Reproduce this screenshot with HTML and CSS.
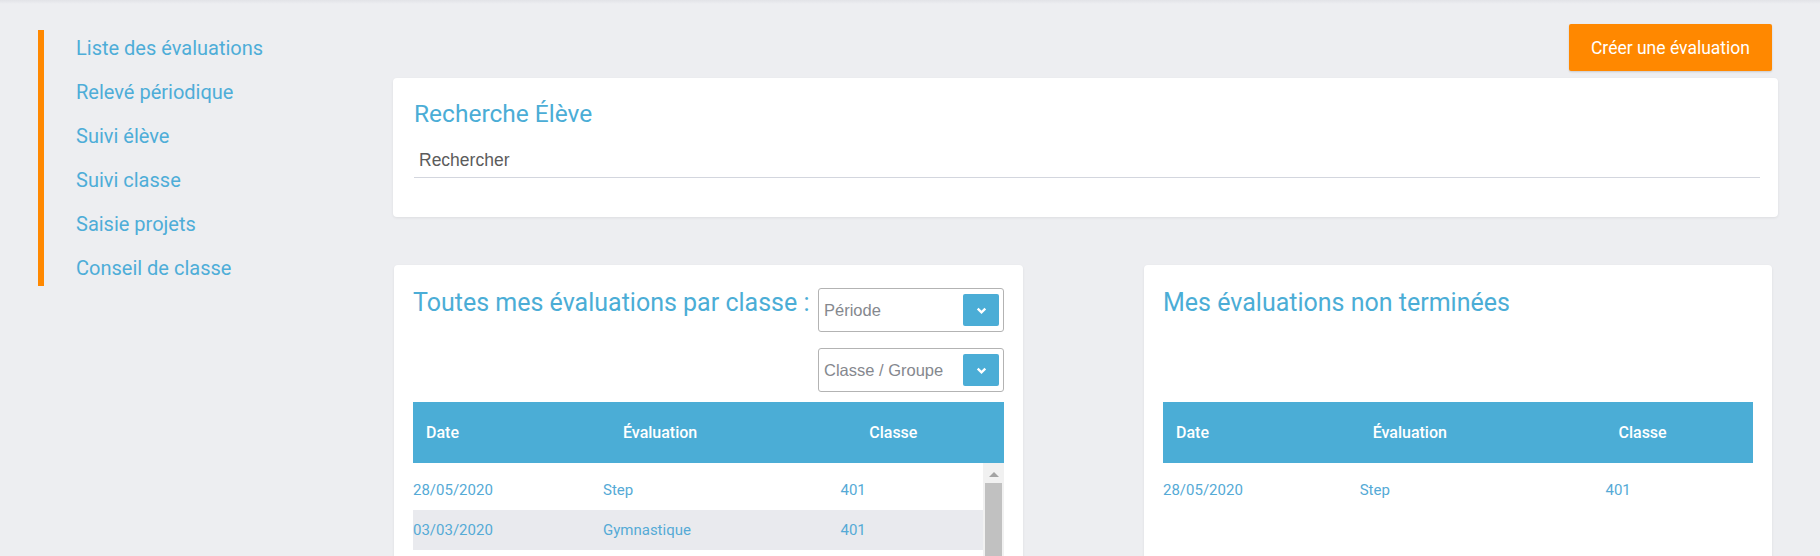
FILE: index.html
```html
<!DOCTYPE html>
<html lang="fr">
  <head>
    <meta charset="utf-8">
    <title>Évaluations</title>
    <link rel="stylesheet" href="styles.css">
  </head>
  <body>
    <div class="app">
      <aside class="sidebar">
        <nav class="side-nav">
          <a href="#">Liste des évaluations</a>
          <a href="#">Relevé périodique</a>
          <a href="#">Suivi élève</a>
          <a href="#">Suivi classe</a>
          <a href="#">Saisie projets</a>
          <a href="#">Conseil de classe</a>
        </nav>
      </aside>

      <main class="main">
        <div class="actions">
          <button class="btn-orange">Créer une évaluation</button>
        </div>

        <section class="card card-search">
          <h2>Recherche Élève</h2>
          <input class="search-input" type="text" placeholder="Rechercher">
        </section>

        <div class="cols">
          <!-- toutes les evaluations -->
          <section class="card card-half">
            <div class="card-head">
              <h2>Toutes mes évaluations par classe :</h2>
              <div class="filters">
                <div class="select">
                  <span>Période</span>
                  <span class="select-btn">
                    <svg width="11" height="8" viewBox="0 0 11 8"><path d="M1.7 1.6 L5.5 5.4 L9.3 1.6" fill="none" stroke="#fff" stroke-width="2.3"/></svg>
                  </span>
                </div>
                <div class="select">
                  <span>Classe / Groupe</span>
                  <span class="select-btn">
                    <svg width="11" height="8" viewBox="0 0 11 8"><path d="M1.7 1.6 L5.5 5.4 L9.3 1.6" fill="none" stroke="#fff" stroke-width="2.3"/></svg>
                  </span>
                </div>
              </div>
            </div>
            <div class="table">
              <div class="table-header">
                <div>Date</div>
                <div>Évaluation</div>
                <div>Classe</div>
              </div>
              <div class="table-body">
                <div class="rows">
                  <div class="row"><div>28/05/2020</div><div>Step</div><div>401</div></div>
                  <div class="row"><div>03/03/2020</div><div>Gymnastique</div><div>401</div></div>
                </div>
                <div class="scrollbar">
                  <span class="scroll-up"></span>
                  <span class="scroll-thumb"></span>
                </div>
              </div>
            </div>
          </section>

          <!-- non terminees -->
          <section class="card card-half">
            <div class="card-head">
              <h2>Mes évaluations non terminées</h2>
            </div>
            <div class="table">
              <div class="table-header">
                <div>Date</div>
                <div>Évaluation</div>
                <div>Classe</div>
              </div>
              <div class="table-body">
                <div class="rows">
                  <div class="row"><div>28/05/2020</div><div>Step</div><div>401</div></div>
                </div>
              </div>
            </div>
          </section>
        </div>
      </main>
    </div>
  </body>
</html>
```

FILE: styles.css
```css
html, body{
  margin: 0;
  height: 100%;
}

body{
  overflow: hidden;
  background: linear-gradient(#e2e3e7, #edeef1 4px) #edeef1;
  font-family: Roboto, "Liberation Sans", sans-serif;
  color: #4badd6;
}

.app{
  display: grid;
  grid-template-columns: 393px 1385px;
  height: 100vh;
}

/* menu de gauche */
.sidebar{
  padding: 30px 0 0 38px;
}

.side-nav{
  display: flex;
  flex-direction: column;
  row-gap: 8px;
  border-left: 6px solid #ff8800;
  padding-left: 32px;
}

.side-nav a{
  line-height: 36px;
  font-size: 20px;
  color: #4eadd8;
  text-decoration: none;
}

.main{
  padding-top: 24px;
}

.actions{
  display: flex;
  justify-content: flex-end;
  padding-right: 6px;
  margin-bottom: 7px;
}

.btn-orange{
  height: 47px;
  padding: 0 22px;
  border: none;
  border-radius: 2px;
  background-color: #ff8800;
  color: white;
  font-family: Roboto, sans-serif;
  font-size: 17.5px;
  box-shadow: 0 1px 2px rgba(0, 0, 0, .15);
}

.card{
  background-color: white;
  border-radius: 4px;
  box-shadow: 0 1px 3px rgba(0, 0, 0, .07);
}

.card h2{
  margin: 0;
  font-size: 25px;
  font-weight: 400;
  line-height: 28px;
  color: #4badd6;
}

.card-search{
  padding: 22px 18px 39px 21px;
  margin-bottom: 48px;
}

.card-search h2{
  font-size: 24.5px;
  margin-bottom: 12px;
}

.search-input{
  display: block;
  width: 100%;
  box-sizing: border-box;
  padding: 10px 5px 6px;
  border: none;
  border-bottom: 1px solid #d3d6de;
  font-family: "Liberation Sans", Arial, sans-serif;
  font-size: 17.5px;
  outline: none;
}

.search-input::placeholder{
  color: #5c5c5c;
}

.cols{
  display: flex;
  column-gap: 121px;
  padding-left: 1px;
}

.card-half{
  width: 629px;
  min-height: 420px;
  box-sizing: border-box;
  padding: 23px 19px;
}

.card-half + .card-half{
  width: 628px;
}

.card-head{
  display: flex;
  justify-content: space-between;
  height: 104px;
  margin-bottom: 10px;
}

.card-head h2{
  margin-top: 1px;
}

.filters{
  display: flex;
  flex-direction: column;
  row-gap: 16px;
}

.select{
  width: 186px;
  height: 44px;
  box-sizing: border-box;
  display: flex;
  align-items: center;
  justify-content: space-between;
  padding: 0 4px 0 5px;
  border: 1px solid #b3b3b3;
  border-radius: 3px;
  font-family: "Liberation Sans", Arial, sans-serif;
  font-size: 16.5px;
  color: #85888e;
}

.select-btn{
  width: 36px;
  height: 32px;
  display: flex;
  align-items: center;
  justify-content: center;
  background-color: #4badd6;
  border-radius: 2px;
}

.select-btn svg{
  margin-top: 2px;
}

.table-header{
  display: grid;
  grid-template-columns: 33.33% 41.67% 25%;
  height: 61px;
  align-items: center;
  background-color: #4badd6;
  color: white;
  font-size: 16px;
  font-weight: 500;
}

.table-header div{
  padding-left: 13px;
}

.table-body{
  display: flex;
}

.rows{
  flex: 1;
  padding-top: 7px;
}

.row{
  display: grid;
  grid-template-columns: 33.33% 41.67% 25%;
  height: 40px;
  align-items: center;
  font-size: 15px;
  color: #55aad6;
}

.row:nth-child(even){
  background-color: #e9eaee;
}

/* fausse barre de defilement */
.scrollbar{
  width: 21px;
  height: 200px;
  background-color: #f1f1f1;
  display: flex;
  flex-direction: column;
  align-items: center;
}

.scroll-up{
  width: 0;
  height: 0;
  margin: 9px 0 6px;
  border-left: 5px solid transparent;
  border-right: 5px solid transparent;
  border-bottom: 5px solid #a3a3a3;
}

.scroll-thumb{
  width: 17px;
  flex: 1;
  background-color: #c1c1c1;
}
```
